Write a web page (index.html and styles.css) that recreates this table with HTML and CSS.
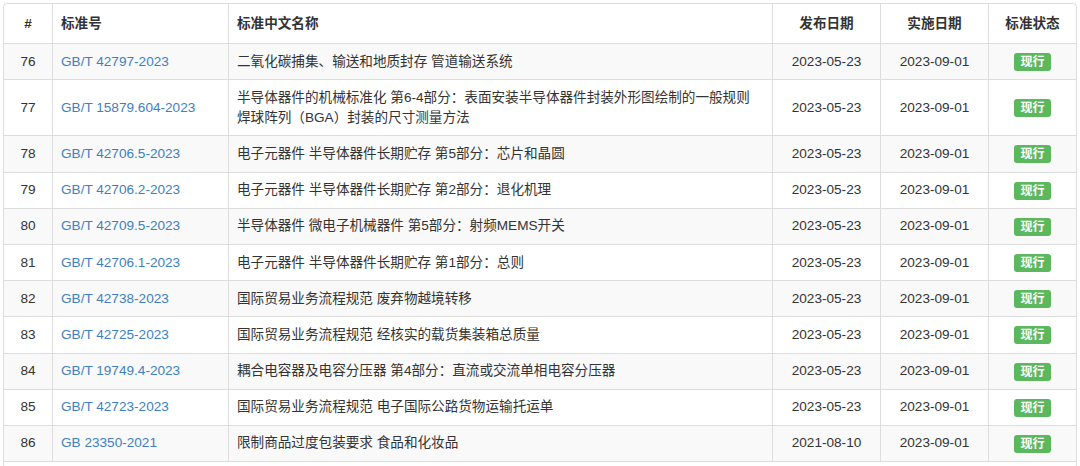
FILE: index.html
```html
<!DOCTYPE html>
<html lang="zh">
<head>
<meta charset="utf-8">
<title>标准列表</title>
<link rel="stylesheet" href="styles.css">
</head>
<body>
<div class="panel">
  <table class="std-table">
    <thead>
      <tr>
        <th class="c-num center">#</th>
        <th class="c-code">标准号</th>
        <th class="c-name">标准中文名称</th>
        <th class="c-date center">发布日期</th>
        <th class="c-date center">实施日期</th>
        <th class="c-status center">标准状态</th>
      </tr>
    </thead>
    <tbody>
      <tr><td class="center">76</td><td><a href="#">GB/T 42797-2023</a></td><td>二氧化碳捕集、输送和地质封存 管道输送系统</td><td class="center">2023-05-23</td><td class="center">2023-09-01</td><td class="center"><span class="badge">现行</span></td></tr>
      <tr><td class="center">77</td><td><a href="#">GB/T 15879.604-2023</a></td><td>半导体器件的机械标准化 第6-4部分：表面安装半导体器件封装外形图绘制的一般规则<br>焊球阵列（BGA）封装的尺寸测量方法</td><td class="center">2023-05-23</td><td class="center">2023-09-01</td><td class="center"><span class="badge">现行</span></td></tr>
      <tr><td class="center">78</td><td><a href="#">GB/T 42706.5-2023</a></td><td>电子元器件 半导体器件长期贮存 第5部分：芯片和晶圆</td><td class="center">2023-05-23</td><td class="center">2023-09-01</td><td class="center"><span class="badge">现行</span></td></tr>
      <tr><td class="center">79</td><td><a href="#">GB/T 42706.2-2023</a></td><td>电子元器件 半导体器件长期贮存 第2部分：退化机理</td><td class="center">2023-05-23</td><td class="center">2023-09-01</td><td class="center"><span class="badge">现行</span></td></tr>
      <tr><td class="center">80</td><td><a href="#">GB/T 42709.5-2023</a></td><td>半导体器件 微电子机械器件 第5部分：射频MEMS开关</td><td class="center">2023-05-23</td><td class="center">2023-09-01</td><td class="center"><span class="badge">现行</span></td></tr>
      <tr><td class="center">81</td><td><a href="#">GB/T 42706.1-2023</a></td><td>电子元器件 半导体器件长期贮存 第1部分：总则</td><td class="center">2023-05-23</td><td class="center">2023-09-01</td><td class="center"><span class="badge">现行</span></td></tr>
      <tr><td class="center">82</td><td><a href="#">GB/T 42738-2023</a></td><td>国际贸易业务流程规范 废弃物越境转移</td><td class="center">2023-05-23</td><td class="center">2023-09-01</td><td class="center"><span class="badge">现行</span></td></tr>
      <tr><td class="center">83</td><td><a href="#">GB/T 42725-2023</a></td><td>国际贸易业务流程规范 经核实的载货集装箱总质量</td><td class="center">2023-05-23</td><td class="center">2023-09-01</td><td class="center"><span class="badge">现行</span></td></tr>
      <tr><td class="center">84</td><td><a href="#">GB/T 19749.4-2023</a></td><td>耦合电容器及电容分压器 第4部分：直流或交流单相电容分压器</td><td class="center">2023-05-23</td><td class="center">2023-09-01</td><td class="center"><span class="badge">现行</span></td></tr>
      <tr><td class="center">85</td><td><a href="#">GB/T 42723-2023</a></td><td>国际贸易业务流程规范 电子国际公路货物运输托运单</td><td class="center">2023-05-23</td><td class="center">2023-09-01</td><td class="center"><span class="badge">现行</span></td></tr>
      <tr><td class="center">86</td><td><a href="#">GB 23350-2021</a></td><td>限制商品过度包装要求 食品和化妆品</td><td class="center">2021-08-10</td><td class="center">2023-09-01</td><td class="center"><span class="badge">现行</span></td></tr>
    </tbody>
  </table>
  <div class="panel-foot"></div>
</div>
</body>
</html>
```

FILE: styles.css
```css
html, body {
  margin: 0;
  padding: 0;
  background: #fff;
}
body {
  padding: 3px;
  font-family: "Liberation Sans", "Noto Sans CJK SC", sans-serif;
  font-size: 13.6px;
  color: #333;
}
.panel {
  border: 1px solid #ddd;
  border-radius: 4px;
  overflow: hidden;
}
.std-table {
  width: 100%;
  table-layout: fixed;
  border-collapse: separate;
  border-spacing: 0;
}
.std-table th,
.std-table td {
  box-sizing: border-box;
  border-right: 1px solid #ddd;
  border-bottom: 1px solid #ddd;
  line-height: 20px;
  text-align: left;
  vertical-align: middle;
}
.std-table th:last-child,
.std-table td:last-child {
  border-right: none;
}
.std-table th {
  font-weight: bold;
  padding: 9.5px 8px;
}
.std-table td {
  padding: 7.6px 8px;
}
.std-table tbody tr:nth-child(odd) td {
  background: #f9f9f9;
}
.c-num { width: 49px; }
.c-code { width: 176px; }
.c-name { width: 544px; }
.c-date { width: 108px; }
.c-status { width: auto; }
.std-table th.center,
.std-table td.center {
  text-align: center;
}
.std-table a {
  color: #3f7fc0;
  text-decoration: none;
}
.badge {
  display: inline-block;
  background: #5cb85c;
  color: #fff;
  font-weight: bold;
  font-size: 12px;
  line-height: 14px;
  padding: 2px 6px;
  border-radius: 3px;
  vertical-align: middle;
}
.panel-foot {
  height: 40px;
}
```
